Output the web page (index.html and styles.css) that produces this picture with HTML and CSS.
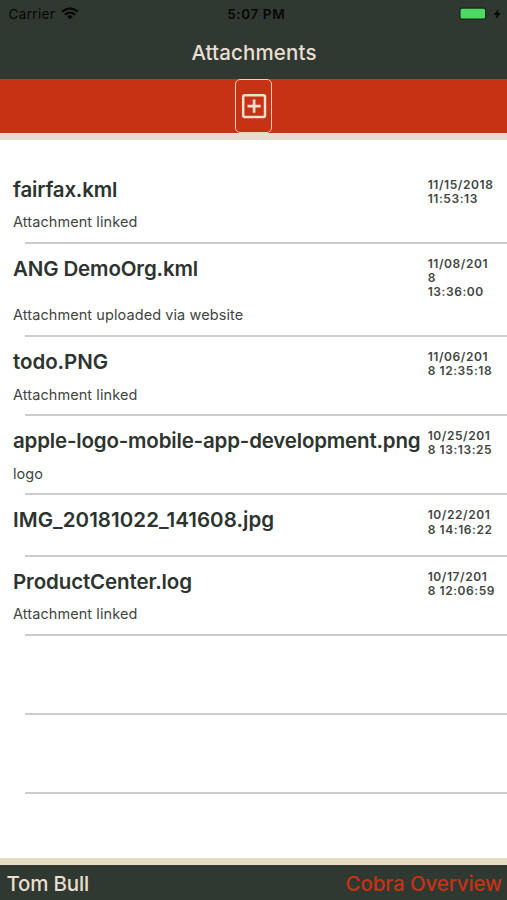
FILE: index.html
```html
<!DOCTYPE html>
<html lang="en">
<head>
<meta charset="utf-8">
<title>Attachments</title>
<link rel="stylesheet" href="styles.css">
</head>
<body>
<header class="header">
  <div class="status">
    <div class="status-left">
      <span class="carrier">Carrier</span>
      <svg class="wifi" width="18" height="13" viewBox="0 0 18 13"><g fill="none" stroke="#060807" stroke-width="2.3"><path d="M1.200 4.700Q9-2 16.800 4.700"/><path d="M4 7.700Q9 3.500 14 7.700"/></g><path d="M6.300 9.400Q9 7.300 11.700 9.400L9 12.300Z" fill="#060807"/></svg>
    </div>
    <span class="clock">5:07 PM</span>
    <div class="status-right">
      <svg width="43" height="14" viewBox="0 0 43 14"><rect x=".8" y="1" width="26" height="11.200" rx="2.300" fill="#4cd964" stroke="#1b2b20" stroke-width="1.500"/><path d="M28.800 5v3.600q1.300-.4 1.300-1.800t-1.300-1.800Z" fill="#1b2b20"/><path d="M39.900 1.500L34.600 7.700H37.600L36.400 12.300L42 5.900H38.700Z" fill="#060807"/></svg>
    </div>
  </div>
  <h1 class="title">Attachments</h1>
</header>
<div class="toolbar">
  <button class="add" aria-label="Add attachment">
    <svg width="26" height="26" viewBox="0 0 26 26" fill="none" stroke="#f3dfcd"><rect x="2.200" y="2.200" width="21.800" height="21.800" rx="1.500" stroke-width="2.500"/><path d="M13.100 6.500v13.200M6.500 13.100h13.200" stroke-width="2.700"/></svg>
  </button>
</div>
<main class="list">
  <article class="row">
    <h2 class="name n1">fairfax.kml</h2>
    <time class="date">11/15/2018<br>11:53:13</time>
    <p class="note">Attachment linked</p>
  </article>
  <article class="row tall">
    <h2 class="name n2">ANG DemoOrg.kml</h2>
    <time class="date">11/08/201<br>8<br>13:36:00</time>
    <p class="note">Attachment uploaded via website</p>
  </article>
  <article class="row">
    <h2 class="name n3">todo.PNG</h2>
    <time class="date">11/06/201<br>8 12:35:18</time>
    <p class="note">Attachment linked</p>
  </article>
  <article class="row">
    <h2 class="name n4">apple-logo-mobile-app-development.png</h2>
    <time class="date">10/25/201<br>8 13:13:25</time>
    <p class="note">logo</p>
  </article>
  <article class="row short">
    <h2 class="name n5">IMG_20181022_141608.jpg</h2>
    <time class="date">10/22/201<br>8 14:16:22</time>
  </article>
  <article class="row">
    <h2 class="name n6">ProductCenter.log</h2>
    <time class="date">10/17/201<br>8 12:06:59</time>
    <p class="note">Attachment linked</p>
  </article>
  <div class="row"></div>
  <div class="row"></div>
</main>
<footer class="footer">
  <span class="user">Tom Bull</span>
  <a class="overview">Cobra Overview</a>
</footer>
</body>
</html>
```
FILE: styles.css
```css
* { box-sizing: border-box; }
body {
  margin: 0;
  height: 900px;
  display: flex;
  flex-direction: column;
  overflow: hidden;
  background: #fff;
  color: #2d342f;
  font-family: Inter, "Liberation Sans", sans-serif;
}
h1, h2, p { margin: 0; }
svg { display: block; }
.header { height: 79px; flex: none; background: #303832; }
.status {
  height: 27px;
  padding: 0 5px 0 8.500px;
  display: grid;
  grid-template-columns: 1fr auto 1fr;
  align-items: center;
  color: #060807;
  font-size: 13.500px;
}
.status-left { display: flex; align-items: center; gap: 6px; }
.carrier { letter-spacing: .35px; }
.clock { font-weight: 600; letter-spacing: .6px; padding-left: 2px; }
.status-right { display: flex; justify-content: flex-end; }
.title {
  height: 50px;
  line-height: 51px;
  text-align: center;
  color: #e8dfd2;
  font-size: 20.500px;
  font-weight: 550;
  letter-spacing: .13px;
  padding-left: 1px;
}
.toolbar {
  height: 61px;
  flex: none;
  display: flex;
  justify-content: center;
  align-items: flex-start;
  background: #c53214;
  border-bottom: 7px solid #e7ddce;
}
.add {
  width: 37px;
  height: 54px;
  padding: 0;
  display: grid;
  place-items: center;
  background: none;
  border: 1px solid #f0cdb5;
  border-radius: 5px;
}
.list { flex: 1; padding-top: 24.500px; }
.row {
  height: 79.050px;
  padding: 12px 0 0 13px;
  display: grid;
  grid-template-columns: 414.700px 1fr;
  grid-template-rows: 33.500px 24px;
  align-content: start;
  background: linear-gradient(#ccc, #ccc) 25px 100% / 100% 2px no-repeat;
}
.tall { height: 93.700px; grid-template-rows: 47.500px 24px; }
.short { height: 61.500px; }
.name { font-size: 20.500px; line-height: 26px; font-weight: 600; white-space: nowrap; }
.n1 { letter-spacing: -.2px; }
.n2 { letter-spacing: -.14px; }
.n3 { letter-spacing: -.06px; }
.n4 { letter-spacing: -.18px; }
.n5 { letter-spacing: .05px; }
.n6 { letter-spacing: -.12px; }
.date { font-size: 12px; line-height: 14.200px; font-weight: 600; letter-spacing: .57px; padding-top: 1px; color: #414642; white-space: nowrap; }
.note { grid-column: 1; font-size: 14.500px; line-height: 24px; color: #414642; letter-spacing: .08px; }
.footer {
  height: 42px;
  flex: none;
  display: flex;
  justify-content: space-between;
  align-items: center;
  padding: 1px 5px 0 6.500px;
  background: #303832;
  border-top: 7px solid #e7dbc6;
  font-size: 20.500px;
  font-weight: 550;
  letter-spacing: -.2px;
}
.user { color: #e8dfcf; }
.overview { color: #c53214; letter-spacing: -.12px; }
```
